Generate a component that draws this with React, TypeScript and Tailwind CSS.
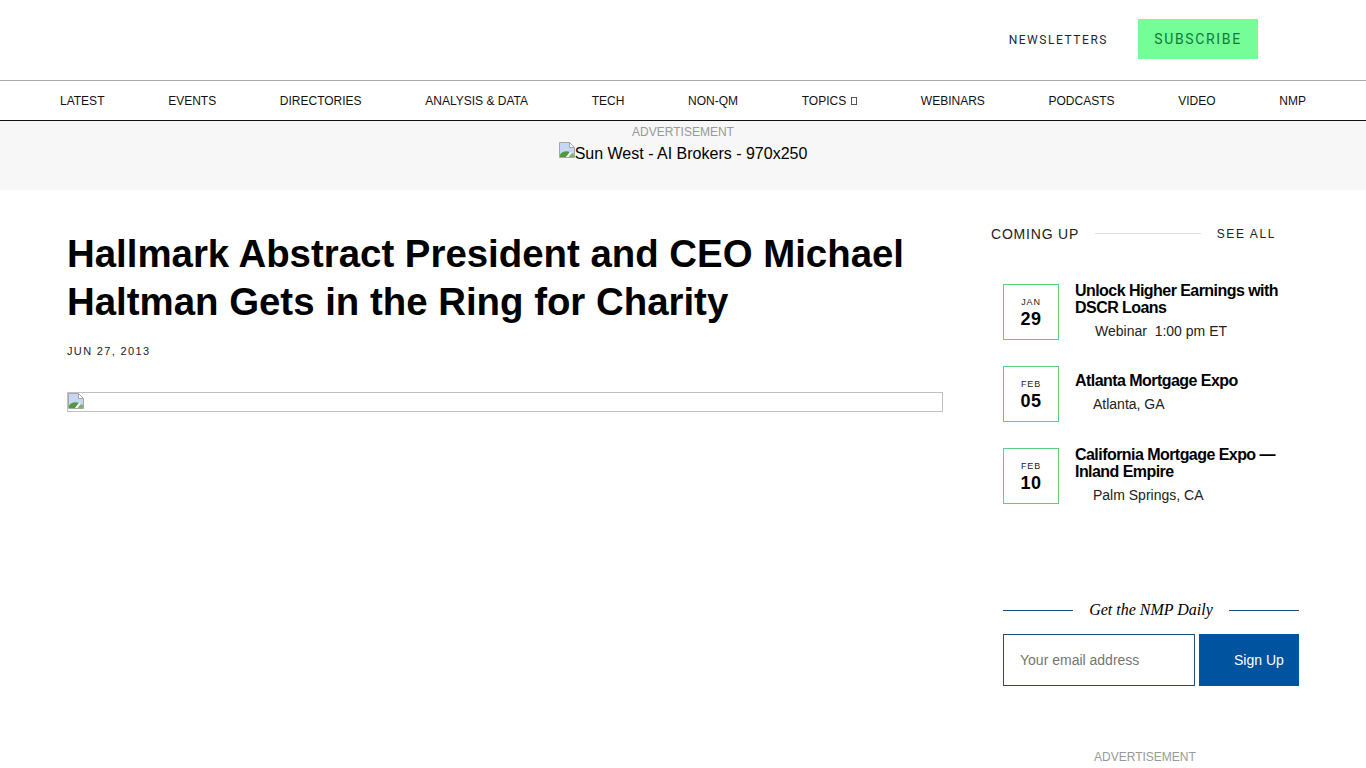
import React from 'react';

const NAV_ITEMS = ['LATEST', 'EVENTS', 'DIRECTORIES', 'ANALYSIS & DATA', 'TECH', 'NON-QM', 'TOPICS', 'WEBINARS', 'PODCASTS', 'VIDEO', 'NMP'];

const EVENTS = [
  { month: 'JAN', day: '29', title: ['Unlock Higher Earnings with', 'DSCR Loans'], meta: 'Webinar\u00a0\u00a01:00 pm ET', indent: 'pl-5', top: '-mt-[2px]' },
  { month: 'FEB', day: '05', title: ['Atlanta Mortgage Expo'], meta: 'Atlanta, GA', indent: 'pl-[18px]', top: 'mt-[6px]' },
  { month: 'FEB', day: '10', title: ['California Mortgage Expo —', 'Inland Empire'], meta: 'Palm Springs, CA', indent: 'pl-[18px]', top: '-mt-[2px]' },
];

const BrokenImage = () => (
  <svg width="16" height="16" viewBox="0 0 16 16" className="shrink-0">
    <path d="M0.5 0.5H10.5L15.5 5.5V15.5H0.5Z" fill="#c8d6f6" stroke="#a6a6a6" />
    <path d="M10.5 0.5V5.5H15.5Z" fill="#ffffff" stroke="#a6a6a6" />
    <path d="M1 15V12.5C3.5 9.5 7 8.5 11 10L7 15Z" fill="#4c9a3a" />
    <path d="M7 15L11 10L13 11L9.5 15Z" fill="#ffffff" />
    <path d="M9.5 15L13 11L15 12V15Z" fill="#7fb56f" />
  </svg>
);

const App: React.FC = () => {
  return (
    <div className="h-[768px] overflow-hidden bg-white font-['Liberation_Sans',Arial,sans-serif] text-black">
      {/* Top bar */}
      <div className="flex h-20 items-center justify-end pr-[108px]">
        <a className="mr-[30px] font-['Roboto',sans-serif] text-xs tracking-[1.55px] text-[#1d2733]">NEWSLETTERS</a>
        <a className="mb-[2px] flex h-10 w-[120px] items-center justify-center bg-[#75fd97] font-['Roboto',sans-serif] text-sm tracking-[1.65px] text-[#0f7a35]">SUBSCRIBE</a>
      </div>

      {/* Nav */}
      <nav className="flex h-[41px] items-center justify-between border-y border-t-[#aaaaaa] border-b-[#111111] px-[60px] text-xs text-[#111111]">
        {NAV_ITEMS.map((item) => (
          <a key={item} className="flex items-center">
            {item}
            {item === 'TOPICS' && <span className="ml-[5px] inline-block h-2 w-[6px] border border-[#555555]" />}
          </a>
        ))}
      </nav>

      {/* Ad band */}
      <div className="flex h-[69px] flex-col items-center bg-[#f7f7f7]">
        <div className="pt-1 text-xs leading-[15px] text-[#999999]">ADVERTISEMENT</div>
        <div className="mt-[2px] flex items-start text-base leading-[18px]">
          <BrokenImage />
          <span className="mt-[3px]">Sun West - AI Brokers - 970x250</span>
        </div>
      </div>

      <div className="flex pl-[67px]">
        {/* Article */}
        <main className="w-[876px] shrink-0 pt-10">
          <h1 className="text-[38.4px] leading-12 font-bold">
            Hallmark Abstract President and CEO Michael
            <br />
            Haltman Gets in the Ring for Charity
          </h1>
          <div className="mt-[19px] text-[11px] leading-[13px] tracking-[1.35px] text-[#222222]">JUN 27, 2013</div>
          <div className="mt-[34px] h-5 border border-[#c0c0c0]">
            <BrokenImage />
          </div>
        </main>

        {/* Sidebar */}
        <aside className="ml-12 w-[308px] shrink-0">
          <div className="mt-9 flex h-4 w-[285px] items-center">
            <span className="text-sm tracking-[0.8px] text-[#222222]">COMING UP</span>
            <span className="mx-4 -mt-[1px] h-px flex-1 bg-[#dddddd]" />
            <span className="text-xs tracking-[1.6px] text-[#222222]">SEE ALL</span>
          </div>

          <div className="mt-[42px] flex flex-col gap-[26px] pl-3">
            {EVENTS.map((ev) => (
              <div key={ev.day} className="flex h-14 gap-4">
                <div className="flex h-14 w-14 shrink-0 flex-col items-center justify-center border border-[#5ccf7f] pt-[1px]">
                  <span className="mb-[1px] text-[9px] leading-[11px] tracking-[0.9px] text-[#222222]">{ev.month}</span>
                  <span className="text-lg leading-5 font-bold tracking-[0.4px]">{ev.day}</span>
                </div>
                <div className={ev.top}>
                  <div className="text-base leading-[17px] font-bold tracking-[-0.55px]">
                    {ev.title.map((line) => (
                      <div key={line}>{line}</div>
                    ))}
                  </div>
                  <div className={`mt-[7px] text-sm leading-4 text-[#222222] ${ev.indent}`}>{ev.meta}</div>
                </div>
              </div>
            ))}
          </div>

          {/* Newsletter */}
          <div className="mt-[98px] ml-3 w-[296px]">
            <div className="flex h-4 items-center">
              <span className="h-px w-[70px] bg-[#1f4e79]" />
              <span className="flex-1 text-center font-['Liberation_Serif',serif] text-base italic">Get the NMP Daily</span>
              <span className="h-px w-[70px] bg-[#1f4e79]" />
            </div>
            <div className="mt-4 flex gap-1">
              <div className="flex h-[52px] w-[192px] items-center border border-[#1f4e79] pl-4 text-sm text-[#757575]">Your email address</div>
              <button className="h-[52px] w-[100px] bg-[#00539f] pl-[35px] text-left text-sm text-white">Sign Up</button>
            </div>
          </div>

          <div className="mt-[64px] ml-[103px] text-xs leading-[15px] text-[#999999]">ADVERTISEMENT</div>
        </aside>
      </div>
    </div>
  );
};

export default App;
